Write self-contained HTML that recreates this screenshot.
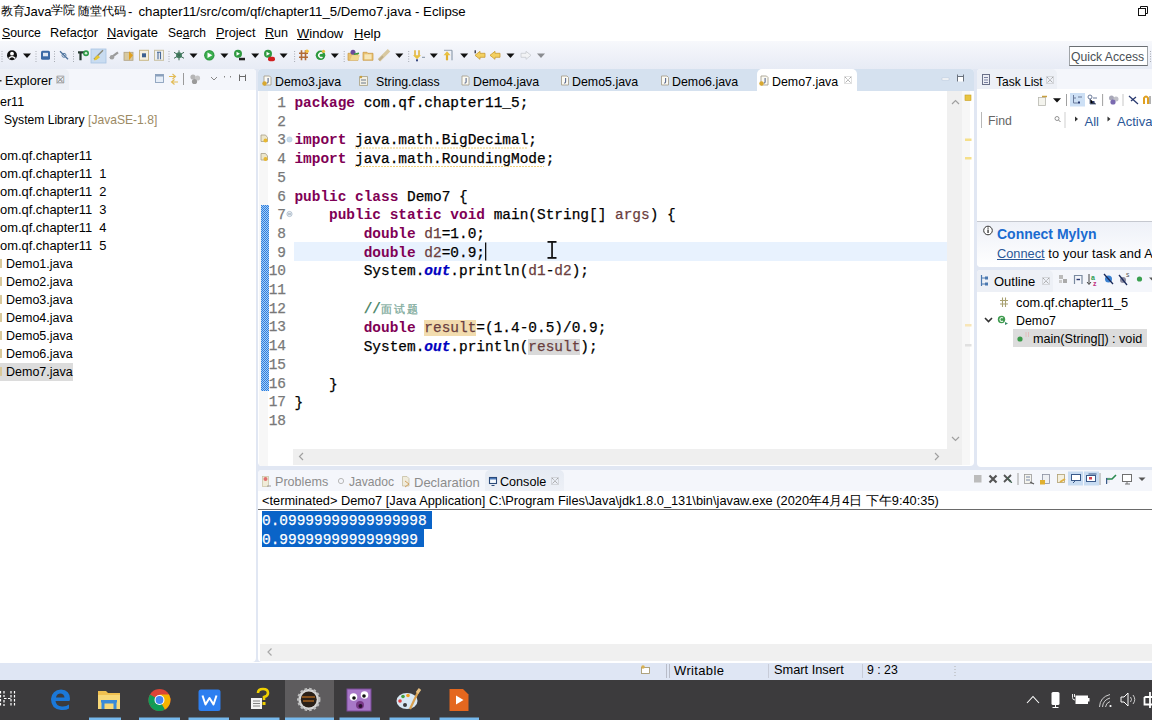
<!DOCTYPE html>
<html><head><meta charset="utf-8">
<style>
*{margin:0;padding:0;box-sizing:border-box}
html,body{width:1152px;height:720px;overflow:hidden;background:#fff;font-family:"Liberation Sans",sans-serif;color:#000;position:relative}
div,span,svg{position:absolute}
.t{white-space:nowrap;line-height:1;font-size:13px}
.u{text-decoration:underline}
.m{font-family:"Liberation Mono",monospace;font-size:14.45px;white-space:pre;line-height:18.7px}
.kw{color:#7f0055;font-weight:bold;position:static;-webkit-text-stroke:0}
.m{-webkit-text-stroke:0.25px}
.var{color:#6a3e3e;position:static}
.fld{color:#0000c0;font-style:italic;font-weight:bold;position:static}
.cm{color:#3f7f5f;position:static}
.s{position:static}
.sep{width:1px;background:#c9cdd6}
.dots{width:1px;height:14px;background:repeating-linear-gradient(#b0b4bc 0 1px,transparent 1px 3px)}
.dd{width:0;height:0;border-left:4px solid transparent;border-right:4px solid transparent;border-top:4px solid #111}
</style></head><body>
<!-- title bar -->
<div class="t" style="left:1px;top:5px;font-size:12px">教育</div>
<div class="t" style="left:24px;top:5px;font-size:13px">Java</div>
<div class="t" style="left:51px;top:5px;font-size:11.5px">学院</div>
<div class="t" style="left:78px;top:5px;font-size:12px">随堂代码</div>
<div class="t" style="left:128px;top:5px;font-size:13px">-</div><div class="t" style="left:138.5px;top:5px;font-size:13.23px">chapter11/src/com/qf/chapter11_5/Demo7.java - Eclipse</div>
<svg style="left:1137px;top:5px" width="12" height="12"><rect x="1.5" y="3.5" width="7" height="7" fill="none" stroke="#111"/><path d="M3.5 3.5V1.5H10.5V8.5H8.5" fill="none" stroke="#111"/></svg>

<!-- menu -->
<div class="t" style="left:2px;top:27px;font-size:12.3px"><span class="s u">S</span>ource</div>
<div class="t" style="left:50px;top:27px;font-size:12.7px">Refac<span class="s u">t</span>or</div>
<div class="t" style="left:107px;top:27px;font-size:12.9px"><span class="s u">N</span>avigate</div>
<div class="t" style="left:168px;top:27px;font-size:12px">Se<span class="s u">a</span>rch</div>
<div class="t" style="left:216px;top:27px;font-size:12.7px"><span class="s u">P</span>roject</div>
<div class="t" style="left:265px;top:27px;font-size:12.6px"><span class="s u">R</span>un</div>
<div class="t" style="left:297px;top:27px;font-size:13px"><span class="s u">W</span>indow</div>
<div class="t" style="left:354px;top:27px;font-size:13px"><span class="s u">H</span>elp</div>

<!-- toolbar -->
<div id="toolbar" style="left:0;top:41px;width:1152px;height:28px;background:linear-gradient(#f7f8fc,#e7ebf5)"></div>
<svg style="left:0;top:0" width="1152" height="69"><rect x="1.5" y="51" width="1" height="1" fill="#a8acb4"/>
<rect x="1.5" y="53.5" width="1" height="1" fill="#a8acb4"/>
<rect x="1.5" y="56.0" width="1" height="1" fill="#a8acb4"/>
<rect x="1.5" y="58.5" width="1" height="1" fill="#a8acb4"/>
<rect x="1.5" y="61.0" width="1" height="1" fill="#a8acb4"/>
<circle cx="12" cy="55.3" r="5" fill="#111"/><circle cx="12" cy="53.699999999999996" r="1.9" fill="#fff"/><path d="M8.6 58.5Q12 54.699999999999996 15.4 58.5" stroke="#fff" stroke-width="1.4" fill="none"/>
<path d="M23 53.6H31L27 58.0Z" fill="#111"/>
<rect x="35.5" y="51" width="1" height="1" fill="#a8acb4"/>
<rect x="35.5" y="53.5" width="1" height="1" fill="#a8acb4"/>
<rect x="35.5" y="56.0" width="1" height="1" fill="#a8acb4"/>
<rect x="35.5" y="58.5" width="1" height="1" fill="#a8acb4"/>
<rect x="35.5" y="61.0" width="1" height="1" fill="#a8acb4"/>
<rect x="41" y="50.8" width="9" height="9" rx="1.5" fill="#3b6aa6"/><rect x="43" y="52.8" width="5" height="3.5" fill="#dfe8f4"/>
<rect x="54.0" y="51" width="1" height="1" fill="#a8acb4"/>
<rect x="54.0" y="53.5" width="1" height="1" fill="#a8acb4"/>
<rect x="54.0" y="56.0" width="1" height="1" fill="#a8acb4"/>
<rect x="54.0" y="58.5" width="1" height="1" fill="#a8acb4"/>
<rect x="54.0" y="61.0" width="1" height="1" fill="#a8acb4"/>
<path d="M60 51.3L68 59.3" stroke="#4a6f9a" stroke-width="1.3"/><circle cx="64" cy="55.3" r="2" fill="none" stroke="#5a7fa8" stroke-width="1"/>
<rect x="73.0" y="51" width="1" height="1" fill="#a8acb4"/>
<rect x="73.0" y="53.5" width="1" height="1" fill="#a8acb4"/>
<rect x="73.0" y="56.0" width="1" height="1" fill="#a8acb4"/>
<rect x="73.0" y="58.5" width="1" height="1" fill="#a8acb4"/>
<rect x="73.0" y="61.0" width="1" height="1" fill="#a8acb4"/>
<path d="M78 52.3H84M80.5 52.3V60.3" stroke="#263a30" stroke-width="2.2"/><circle cx="86" cy="53.3" r="3" fill="#2e9a47"/><circle cx="86" cy="53.3" r="1.3" fill="#d8f0d8"/>
<rect x="91" y="49" width="15" height="14" fill="#c9dcf1" stroke="#a9c4e4" stroke-width="0.8"/>
<path d="M94 59.3L97 56.3L103 50.3" stroke="#8a8a7a" stroke-width="1.5"/><path d="M94 60.3Q95 56.3 98 55.3L100 57.3Q97 60.3 94 60.3Z" fill="#e8c830"/>
<path d="M110 58.3L114 55.3L118 52.3" stroke="#9a9a9a" stroke-width="2.2"/><circle cx="112" cy="57.3" r="2.2" fill="#a0a0a0"/>
<rect x="124" y="52.3" width="9" height="8" fill="#d8c9a0" stroke="#b0a080" stroke-width="0.8"/><path d="M129 51.3L133 55.3L129 60.3" fill="#e0a020"/>
<rect x="139.5" y="50.3" width="9" height="10" fill="#f4f0e0" stroke="#c8b888" stroke-width="1"/><rect x="142" y="53.3" width="4" height="4" fill="#3c6090"/>
<rect x="154.5" y="50.3" width="9" height="10" fill="#eef0f0" stroke="#c8c0a0" stroke-width="1"/><path d="M157 52.3H161M158 52.3V59.3M160.5 52.3V59.3" stroke="#4a6a98" stroke-width="1.1"/>
<rect x="168.5" y="51" width="1" height="1" fill="#a8acb4"/>
<rect x="168.5" y="53.5" width="1" height="1" fill="#a8acb4"/>
<rect x="168.5" y="56.0" width="1" height="1" fill="#a8acb4"/>
<rect x="168.5" y="58.5" width="1" height="1" fill="#a8acb4"/>
<rect x="168.5" y="61.0" width="1" height="1" fill="#a8acb4"/>
<circle cx="179" cy="55.3" r="3" fill="#4a8a6a"/><path d="M174 52.3L184 58.3M174 58.3L184 52.3M179 50.3V60.3" stroke="#3d6a55" stroke-width="1"/>
<path d="M189.5 53.6H197.5L193.5 58.0Z" fill="#111"/>
<circle cx="209.3" cy="55.3" r="5.2" fill="#2f9a40"/><circle cx="209.3" cy="55.3" r="4" fill="#3cae50"/><path d="M207.5 52.5L212.3 55.3L207.5 58.099999999999994Z" fill="#fff"/>
<path d="M220.4 53.6H228.4L224.4 58.0Z" fill="#111"/>
<circle cx="238" cy="53.8" r="4" fill="#2f9a40"/><path d="M236.5 51.8L240 53.8L236.5 55.8Z" fill="#fff"/><rect x="239" y="57.8" width="6" height="2.5" fill="#222"/>
<path d="M251.2 53.6H259.2L255.2 58.0Z" fill="#111"/>
<circle cx="268" cy="53.8" r="4" fill="#2f9a40"/><path d="M266.5 51.8L270 53.8L266.5 55.8Z" fill="#fff"/><rect x="268" y="56.8" width="7" height="4.5" rx="2" fill="#d02020"/>
<path d="M279.6 53.6H287.6L283.6 58.0Z" fill="#111"/>
<rect x="294.1" y="51" width="1" height="1" fill="#a8acb4"/>
<rect x="294.1" y="53.5" width="1" height="1" fill="#a8acb4"/>
<rect x="294.1" y="56.0" width="1" height="1" fill="#a8acb4"/>
<rect x="294.1" y="58.5" width="1" height="1" fill="#a8acb4"/>
<rect x="294.1" y="61.0" width="1" height="1" fill="#a8acb4"/>
<path d="M299 53.3H308M299 57.3H308M301.5 50.3V60.3M305.5 50.3V60.3" stroke="#b06a38" stroke-width="1.6"/><circle cx="307" cy="51.3" r="1.8" fill="#f0c040"/>
<circle cx="320.5" cy="55.3" r="4.8" fill="#2d9a3e"/><path d="M322.5 53.5A2.3 2.3 0 1 0 322.5 57.099999999999994" stroke="#fff" stroke-width="1.5" fill="none"/><circle cx="323.5" cy="51.3" r="1.6" fill="#e8c040"/>
<path d="M330.8 53.6H338.8L334.8 58.0Z" fill="#111"/>
<rect x="343.7" y="51" width="1" height="1" fill="#a8acb4"/>
<rect x="343.7" y="53.5" width="1" height="1" fill="#a8acb4"/>
<rect x="343.7" y="56.0" width="1" height="1" fill="#a8acb4"/>
<rect x="343.7" y="58.5" width="1" height="1" fill="#a8acb4"/>
<rect x="343.7" y="61.0" width="1" height="1" fill="#a8acb4"/>
<path d="M348 53.3H352L353 54.3H358V60.3H348Z" fill="#e8c070" stroke="#c89840" stroke-width="0.7"/><path d="M350 60.3L352 55.3H360L358 60.3Z" fill="#f0d890"/><circle cx="353" cy="52.3" r="2.5" fill="#6a4a9a"/><path d="M354 54.3L359 53.3" stroke="#3a9a40" stroke-width="1.5"/>
<path d="M363 52.3H367L368 53.3H373V60.3H363Z" fill="#e8c070" stroke="#c89840" stroke-width="0.7"/><rect x="364.5" y="54.3" width="7" height="5" fill="#f6e6b8"/>
<path d="M379 60.3L389 50.3" stroke="#d8c8a0" stroke-width="3.5"/><path d="M379 60.3L383 56.3" stroke="#bfae88" stroke-width="2"/>
<path d="M395.3 53.6H403.3L399.3 58.0Z" fill="#111"/>
<rect x="408.2" y="51" width="1" height="1" fill="#a8acb4"/>
<rect x="408.2" y="53.5" width="1" height="1" fill="#a8acb4"/>
<rect x="408.2" y="56.0" width="1" height="1" fill="#a8acb4"/>
<rect x="408.2" y="58.5" width="1" height="1" fill="#a8acb4"/>
<rect x="408.2" y="61.0" width="1" height="1" fill="#a8acb4"/>
<path d="M415 50.3V56.3M419 50.3V56.3" stroke="#e0b030" stroke-width="1.5"/><path d="M413 55.3H421L417 59.3Z" fill="#e8c040"/><rect x="416" y="59.3" width="2" height="2" fill="#3a4a80"/><path d="M422 57.3H425" stroke="#8090a0" stroke-width="1"/>
<path d="M429.8 53.6H437.8L433.8 58.0Z" fill="#111"/>
<path d="M447 60.3V54.3" stroke="#e0b030" stroke-width="2.2"/><path d="M443.5 55.3H450.5L447 51.3Z" fill="#e8c040"/><path d="M452 50.3V60.3" stroke="#7f8ea0" stroke-width="1"/><path d="M444 50.3H452" stroke="#7f8ea0" stroke-width="0.8"/>
<path d="M460.2 53.6H468.2L464.2 58.0Z" fill="#111"/>
<path d="M475 55.3L480 51.3V53.3H485V57.3H480V59.3Z" fill="#f3d060" stroke="#c89a30" stroke-width="0.8"/><rect x="474.5" y="50.3" width="1.5" height="3" fill="#445"/>
<path d="M490 55.3L495 51.3V53.3H500V57.3H495V59.3Z" fill="#f3d060" stroke="#c89a30" stroke-width="0.8"/>
<path d="M506.5 53.6H514.5L510.5 58.0Z" fill="#111"/>
<path d="M531 55.3L526 51.3V53.3H521V57.3H526V59.3Z" fill="#f2f3f5" stroke="#c8cbd0" stroke-width="0.8"/>
<path d="M537 53.6H545L541 58.0Z" fill="#8a8c90"/>
<rect x="1150.0" y="51" width="1" height="1" fill="#a8acb4"/>
<rect x="1150.0" y="53.5" width="1" height="1" fill="#a8acb4"/>
<rect x="1150.0" y="56.0" width="1" height="1" fill="#a8acb4"/>
<rect x="1150.0" y="58.5" width="1" height="1" fill="#a8acb4"/>
<rect x="1150.0" y="61.0" width="1" height="1" fill="#a8acb4"/>
</svg>
<div style="left:1068.5px;top:46px;width:79px;height:20px;background:#fff;border:1px solid #a0a4a8;border-top-color:#6a6e72;border-bottom-color:#6a6e72"></div>
<div class="t" style="left:1071px;top:51px;font-size:12.2px;color:#4a5055">Quick Access</div>

<!-- main bg -->
<div style="left:0;top:69px;width:1152px;height:593px;background:#e1e7f3"></div>

<!-- LEFT PANEL -->
<div style="left:0;top:69px;width:256px;height:593px;background:#fff;border-radius:0 4px 4px 0;overflow:hidden">
  <div style="left:0;top:0;width:256px;height:21px;background:#f4f6fb"></div>
  <div style="left:0;top:0;width:69px;height:21px;background:#edf0f6;border-radius:0 5px 0 0"></div>
  <div class="t" style="left:5px;top:6px;font-size:12.7px">Explorer</div>
  <div class="t" style="left:56px;top:6px;font-size:10px;color:#888">☒</div>
  <div class="t" style="left:0px;top:27px;font-size:12.5px">er11</div>
  <div class="t" style="left:4px;top:45px;font-size:12.1px">System Library <span class="s" style="color:#9c8a64">[JavaSE-1.8]</span></div>
  <div class="t" style="left:0px;top:81px;font-size:12.9px">om.qf.chapter11</div>
  <div class="t" style="left:0px;top:99px;font-size:12.9px">om.qf.chapter11&nbsp; 1</div>
  <div class="t" style="left:0px;top:117px;font-size:12.9px">om.qf.chapter11&nbsp; 2</div>
  <div class="t" style="left:0px;top:135px;font-size:12.9px">om.qf.chapter11&nbsp; 3</div>
  <div class="t" style="left:0px;top:153px;font-size:12.9px">om.qf.chapter11&nbsp; 4</div>
  <div class="t" style="left:0px;top:171px;font-size:12.9px">om.qf.chapter11&nbsp; 5</div>
  <div style="left:0;top:294px;width:73px;height:18px;background:#dcdcdc"></div>
  <div class="t" style="left:6px;top:189px;font-size:12.5px">Demo1.java</div>
  <div class="t" style="left:6px;top:207px;font-size:12.5px">Demo2.java</div>
  <div class="t" style="left:6px;top:225px;font-size:12.5px">Demo3.java</div>
  <div class="t" style="left:6px;top:243px;font-size:12.5px">Demo4.java</div>
  <div class="t" style="left:6px;top:261px;font-size:12.5px">Demo5.java</div>
  <div class="t" style="left:6px;top:279px;font-size:12.5px">Demo6.java</div>
  <div class="t" style="left:6px;top:297px;font-size:12.5px">Demo7.java</div>
</div>

<!-- EDITOR -->
<div style="left:258px;top:69px;width:716px;height:397px;background:#fff;border-radius:4px;overflow:hidden">
  <div style="left:0;top:0;width:716px;height:22px;background:#d5e1ef"></div>
  <div style="left:499px;top:0;width:100px;height:22px;background:#fff;border-radius:5px 5px 0 0"></div>
  <div class="t" style="left:17px;top:7px;font-size:12.4px">Demo3.java</div>
  <div class="t" style="left:118px;top:7px;font-size:12.3px">String.class</div>
  <div class="t" style="left:215px;top:7px;font-size:12.4px">Demo4.java</div>
  <div class="t" style="left:314px;top:7px;font-size:12.4px">Demo5.java</div>
  <div class="t" style="left:414px;top:7px;font-size:12.4px">Demo6.java</div>
  <div class="t" style="left:514px;top:7px;font-size:12.4px">Demo7.java</div>
  <!-- ruler -->
  <div style="left:1px;top:22px;width:9px;height:376px;background:#f7f7f7"></div>
  <!-- current line -->
  <div style="left:36px;top:173px;width:653px;height:19px;background:#e8f2fe"></div>
  <!-- vscroll -->
  <div style="left:689px;top:22px;width:15px;height:358px;background:#f0f0f0"></div><div style="left:704px;top:22px;width:8px;height:374px;background:#f7f7f7"></div>
  <!-- hscroll -->
  <div style="left:10px;top:380px;width:25px;height:16px;background:#fff"></div><div style="left:35px;top:380px;width:669px;height:16px;background:#efefef"></div>
</div>

<!-- TASK LIST -->
<div style="left:977px;top:69px;width:175px;height:198px;background:#fff;border-radius:4px 0 0 4px;overflow:hidden">
  <div style="left:0;top:0;width:175px;height:20px;background:#f4f6fb"></div>
  <div style="left:0;top:0;width:80px;height:20px;background:#edf0f6;border-radius:0 5px 0 0"></div>
  <div class="t" style="left:19px;top:7px;font-size:12px">Task List</div>
  <div class="t" style="left:11px;top:46px;font-size:12.3px;color:#666">Find</div>
  <div class="t" style="left:107.5px;top:46px;font-size:13px;color:#2b5797">All</div>
  <div class="t" style="left:140px;top:46px;font-size:13px;color:#2b5797">Activate...</div>
  <div style="left:0;top:152px;width:175px;height:1px;background:#c5c8cf"></div>
  <div style="left:0;top:153px;width:175px;height:45px;background:linear-gradient(#eef1f8,#fff)"></div>
  <div class="t" style="left:20px;top:158px;font-size:14px;font-weight:bold;color:#1a6bd0">Connect Mylyn</div>
  <div class="t" style="left:20px;top:179px;font-size:12.8px"><span class="s u" style="color:#2b5797">Connect</span><span class="s" style="letter-spacing:0.12px"> to your task and ALM tools</span></div>
</div>

<!-- OUTLINE -->
<div style="left:977px;top:270px;width:175px;height:197px;background:#fff;border-radius:4px 0 0 4px;overflow:hidden">
  <div style="left:0;top:0;width:175px;height:22px;background:#f4f6fb"></div>
  <div style="left:0;top:0;width:76px;height:22px;background:#edf0f6;border-radius:0 5px 0 0"></div>
  <div class="t" style="left:17px;top:5px;font-size:13px">Outline</div>
  <div class="t" style="left:39px;top:26.5px;font-size:12.8px">com.qf.chapter11_5</div>
  <div class="t" style="left:39px;top:44.5px;font-size:12.4px">Demo7</div>
  <div style="left:36px;top:59px;width:134px;height:18px;background:#dcdcdc"></div>
  <div class="t" style="left:56px;top:62.5px;font-size:12.6px">main(String[]) : void</div>
</div>

<!-- CONSOLE -->
<div style="left:258px;top:470px;width:894px;height:192px;background:#fff;border-radius:4px 0 0 4px;overflow:hidden">
  <div style="left:0;top:0;width:894px;height:21px;background:#f4f6fb"></div>
  <div style="left:227px;top:0;width:79px;height:21px;background:linear-gradient(#e6ebf3,#edf0f6);border-radius:5px 5px 0 0"></div>
  <div class="t" style="left:17px;top:6px;font-size:12.6px;color:#8c8c8c">Problems</div>
  <div class="t" style="left:91px;top:6px;font-size:12.1px;color:#8c8c8c">Javadoc</div>
  <div class="t" style="left:156px;top:6px;font-size:13px;color:#8c8c8c">Declaration</div>
  <div class="t" style="left:242px;top:6px;font-size:12.6px">Console</div>
  <div class="t" style="left:4px;top:25px;font-size:12.8px">&lt;terminated&gt; Demo7 [Java Application] C:\Program Files\Java\jdk1.8.0_131\bin\javaw.exe (2020年4月4日 下午9:40:35)</div>
  <div style="left:0;top:39px;width:894px;height:1px;background:#6a6a6a"></div>
  <div style="left:4px;top:41px;width:170px;height:18px;background:#0a64c8"></div>
  <div style="left:4px;top:59px;width:162px;height:18px;background:#0a64c8"></div>
  <div class="m" style="left:4px;top:42px;color:#fff">0.09999999999999998
0.9999999999999999</div>
  <div style="left:2px;top:174px;width:892px;height:17px;background:#f0f0f0"></div>
</div>

<!-- CODE -->
<div class="m" style="left:294.4px;top:94px;color:#000"><span class="kw">package</span> com.qf.chapter11_5;

<span class="kw">import</span> java.math.BigDecimal;
<span class="kw">import</span> java.math.RoundingMode;

<span class="kw">public</span> <span class="kw">class</span> Demo7 {
    <span class="kw">public</span> <span class="kw">static</span> <span class="kw">void</span> main(String[] <span class="var">args</span>) {
        <span class="kw">double</span> <span class="var">d1</span>=1.0;
        <span class="kw">double</span> <span class="var">d2</span>=0.9;
        System.<span class="fld">out</span>.println(<span class="var">d1</span>-<span class="var">d2</span>);

        <span class="cm">//<span class="s" style="font-size:11px;letter-spacing:1.9px;color:#7aa898">面试题</span></span>
        <span class="kw">double</span> <span class="var" style="background:#f2dcae">result</span>=(1.4-0.5)/0.9;
        System.<span class="fld">out</span>.println(<span class="var" style="background:#d9d9d9">result</span>);

    }
}
</div>
<div class="m" style="left:266px;top:94px;width:20px;text-align:right;color:#787878">1
2
3
4
5
6
7
8
9
10
11
12
13
14
15
16
17
18</div>

<!-- STATUS -->
<div style="left:0;top:663px;width:1152px;height:17px;background:#dfe6f4"></div>
<div class="t" style="left:674px;top:664px;font-size:13px;letter-spacing:0.35px">Writable</div>
<div class="t" style="left:774px;top:664px;font-size:12.8px">Smart Insert</div>
<div class="t" style="left:867px;top:664px;font-size:12.3px">9 : 23</div>

<!-- TASKBAR -->
<div style="left:0;top:680px;width:1152px;height:40px;background:#3c3b3d"></div>
<div style="left:285px;top:680px;width:49px;height:40px;background:#5b5a5c"></div>
<svg style="left:0;top:0;pointer-events:none" width="1152" height="720"><rect x="155.5" y="74.5" width="8" height="8" fill="#e6eef8" stroke="#8aa0bc" stroke-width="0.9"/><rect x="155.5" y="74.5" width="8" height="2" fill="#8aa0bc"/>
<path d="M169 76.5H176M172.5 74L175.5 76.5L172.5 79" stroke="#e2bb55" stroke-width="1.1" fill="none"/><path d="M178 82H171M174.5 79.5L171.5 82L174.5 84.5" stroke="#e2bb55" stroke-width="1.1" fill="none"/>
<rect x="183.0" y="73" width="1" height="12" fill="#9a9a9a"/>
<circle cx="193" cy="77" r="2.6" fill="#b5b5b5"/><circle cx="197.5" cy="78" r="2.6" fill="#c5c5c5"/><circle cx="194.5" cy="81.5" r="2.6" fill="#9a9a9a"/>
<path d="M211 77L214 80L217 77" stroke="#888" stroke-width="1" fill="none"/>
<rect x="224" y="76" width="1" height="1.5" fill="#888"/><rect x="230" y="76" width="1" height="1.5" fill="#888"/>
<path d="M239.5 74.5V81M245.5 74.5V81M239.5 76.5H245.5" stroke="#6a6a6a" stroke-width="1" fill="none"/>
<rect x="0" y="80" width="1.5" height="1.5" fill="#333"/>
<path d="M57 77L63 83M63 77L57 83" stroke="#9a9a9a" stroke-width="1" stroke-dasharray="1.2 0.8"/><rect x="56.5" y="76.5" width="7" height="7" fill="none" stroke="#9a9a9a" stroke-width="0.6" stroke-dasharray="1 1"/>
<rect x="0" y="259" width="2" height="9" fill="#d8c89a"/>
<rect x="0" y="277" width="2" height="9" fill="#d8c89a"/>
<rect x="0" y="295" width="2" height="9" fill="#d8c89a"/>
<rect x="0" y="313" width="2" height="9" fill="#d8c89a"/>
<rect x="0" y="331" width="2" height="9" fill="#d8c89a"/>
<rect x="0" y="349" width="2" height="9" fill="#d8c89a"/>
<rect x="0" y="367" width="2" height="9" fill="#d8c89a"/>
<path d="M264.0 76.0H269.5L271.0 77.5V85.0H264.0Z" fill="#fbfaf3" stroke="#a8a290" stroke-width="0.9"/><path d="M268.1 78.0V82.0Q267.9 83.3 266.5 83.0" stroke="#5a6a90" stroke-width="1.1" fill="none"/>
<circle cx="264.5" cy="83.5" r="2.2" fill="#d8a830"/>
<path d="M359.5 76.5H367.5V85.5H359.5Z" fill="#f2efe4" stroke="#a8a080" stroke-width="0.8"/><path d="M361 80H366M361 83H366" stroke="#6a7a8a" stroke-width="1.2"/><circle cx="361" cy="77" r="1.2" fill="#c8a040"/>
<path d="M462.0 76.0H467.5L469.0 77.5V85.0H462.0Z" fill="#fbfaf3" stroke="#a8a290" stroke-width="0.9"/><path d="M466.1 78.0V82.0Q465.9 83.3 464.5 83.0" stroke="#5a6a90" stroke-width="1.1" fill="none"/>
<path d="M561.5 76.0H567L568.5 77.5V85.0H561.5Z" fill="#fbfaf3" stroke="#a8a290" stroke-width="0.9"/><path d="M565.6 78.0V82.0Q565.4 83.3 564 83.0" stroke="#5a6a90" stroke-width="1.1" fill="none"/>
<path d="M661.5 76.0H667L668.5 77.5V85.0H661.5Z" fill="#fbfaf3" stroke="#a8a290" stroke-width="0.9"/><path d="M665.6 78.0V82.0Q665.4 83.3 664 83.0" stroke="#5a6a90" stroke-width="1.1" fill="none"/>
<path d="M761.0 76.0H766.5L768.0 77.5V85.0H761.0Z" fill="#fbfaf3" stroke="#a8a290" stroke-width="0.9"/><path d="M765.1 78.0V82.0Q764.9 83.3 763.5 83.0" stroke="#5a6a90" stroke-width="1.1" fill="none"/>
<circle cx="761.5" cy="83.5" r="2.2" fill="#d8a830"/>
<path d="M845 77L851 83M851 77L845 83" stroke="#9a9a9a" stroke-width="1" stroke-dasharray="1.2 0.8"/><rect x="844.5" y="76.5" width="7" height="7" fill="none" stroke="#9a9a9a" stroke-width="0.6" stroke-dasharray="1 1"/>
<rect x="942" y="78" width="7" height="2" fill="#fff" stroke="#b8c4d4" stroke-width="0.5"/>
<rect x="957.5" y="76.5" width="6" height="5" fill="#fff"/><path d="M957.5 74.5V81.5M963.5 74.5V81.5M957.5 76.5H963.5" stroke="#6a727e" stroke-width="1" fill="none"/>
<path d="M261 135H265.5L267.5 137.5V141.5H261Z" fill="#ece6cc" stroke="#a8a088" stroke-width="0.8"/><circle cx="265.5" cy="140.5" r="2" fill="#e8b830"/>
<path d="M261 153.5H265.5L267.5 156.0V160.0H261Z" fill="#ece6cc" stroke="#a8a088" stroke-width="0.8"/><circle cx="265.5" cy="159.0" r="2" fill="#e8b830"/>
<circle cx="289.5" cy="139.5" r="2.6" fill="#c8dcec" stroke="#b0c8dc" stroke-width="0.6"/>
<circle cx="289.5" cy="214" r="2.6" fill="#e8eef4" stroke="#a8b8c8" stroke-width="0.8"/><path d="M288 214H291" stroke="#7a8a9a" stroke-width="0.8"/>
<defs><pattern id="chk" width="2" height="2" patternUnits="userSpaceOnUse"><rect width="2" height="2" fill="#a8ccf4"/><rect width="1" height="1" fill="#2c7fe0"/><rect x="1" y="1" width="1" height="1" fill="#2c7fe0"/></pattern></defs>
<rect x="261" y="205" width="8" height="186" fill="url(#chk)"/>
<rect x="355" y="147.5" width="172" height="1" fill="url(#sq)"/>
<rect x="355" y="166" width="189" height="1" fill="url(#sq)"/>
<defs><pattern id="sq" width="3" height="1" patternUnits="userSpaceOnUse"><rect width="2" height="1" fill="#f0cf78"/></pattern></defs>
<rect x="485" y="242.5" width="1.3" height="18" fill="#111"/>
<rect x="547.5" y="241" width="9" height="1.8" fill="#111"/><rect x="547.5" y="257" width="9" height="1.8" fill="#111"/><rect x="551.2" y="242" width="1.7" height="16" fill="#111"/>
<rect x="965" y="95" width="6" height="5.5" fill="#e8c440" stroke="#c8a020" stroke-width="0.6"/>
<rect x="965" y="138.5" width="6.5" height="2.5" fill="#f5df8a"/>
<rect x="965" y="157" width="6.5" height="2.5" fill="#f5df8a"/>
<rect x="965" y="324" width="6.5" height="2.5" fill="#f8e6b8"/>
<rect x="965" y="344" width="6.5" height="2.5" fill="#e0e0e0"/>
<path d="M952 104L955.5 100.5L959 104" stroke="#a0a0a0" stroke-width="1.2" fill="none"/>
<path d="M952 437L955.5 440.5L959 437" stroke="#a0a0a0" stroke-width="1.2" fill="none"/>
<path d="M303 453L299.5 456.5L303 460" stroke="#a0a0a0" stroke-width="1.2" fill="none"/>
<path d="M935 453L938.5 456.5L935 460" stroke="#a0a0a0" stroke-width="1.2" fill="none"/>
<rect x="982.5" y="74.5" width="7" height="10" fill="#eceef4" stroke="#6a7088" stroke-width="1"/><path d="M984 77.5H988M984 80H988M984 82.5H988" stroke="#7a80a0" stroke-width="1"/>
<path d="M1047 77L1053 83M1053 77L1047 83" stroke="#9a9a9a" stroke-width="1" stroke-dasharray="1.2 0.8"/><rect x="1046.5" y="76.5" width="7" height="7" fill="none" stroke="#9a9a9a" stroke-width="0.6" stroke-dasharray="1 1"/>
<rect x="1038.5" y="97.5" width="7" height="8" fill="#f4f4ee" stroke="#b8b8b0" stroke-width="0.8"/><path d="M1042 96.5L1047 96.5" stroke="#c8a040" stroke-width="1.5"/>
<path d="M1053 98.2H1061L1057 102.4Z" fill="#111"/>
<rect x="1066.0" y="94" width="1" height="12" fill="#a0a0a0"/>
<rect x="1070" y="93" width="15" height="13.5" fill="#cde0f5"/>
<path d="M1073.5 95V103M1073.5 98H1076M1073.5 103H1078M1078 97H1082" stroke="#6a7a9a" stroke-width="1"/><rect x="1078" y="101.5" width="2" height="2" fill="#2a3a70"/>
<circle cx="1090" cy="97" r="2" fill="none" stroke="#6a7a9a" stroke-width="1"/><path d="M1090 99V104H1096M1093 98H1097" stroke="#6a7a9a" stroke-width="1"/><rect x="1092.5" y="101" width="2" height="2" fill="#2a3a70"/>
<rect x="1102.1" y="94" width="1" height="12" fill="#a0a0a0"/>
<circle cx="1111.5" cy="98" r="2.5" fill="#a8a8b8"/><circle cx="1116" cy="99" r="2.5" fill="#c0c0c8"/><circle cx="1113" cy="102" r="2.6" fill="#7a6ab0"/>
<rect x="1122.5" y="94" width="1" height="12" fill="#c8c8c8"/>
<path d="M1129 96L1138 104M1131 101L1136 97" stroke="#2a3a70" stroke-width="1.3"/>
<path d="M1144 104V98Q1146 95 1148 98V104" stroke="#e0a020" stroke-width="2" fill="none"/><path d="M1150 96V104" stroke="#666" stroke-width="1"/>
<rect x="981.0" y="112" width="1" height="16" fill="#b8b8b8"/>
<circle cx="1057" cy="118.5" r="2" fill="none" stroke="#888" stroke-width="0.9"/><path d="M1058.5 120L1060.5 122" stroke="#888" stroke-width="1"/>
<rect x="1064.5" y="112" width="1" height="16" fill="#d0d0d0"/>
<path d="M1075 116.5L1078 119L1075 121.5Z" fill="#333"/><path d="M1107.5 116.5L1110.5 119L1107.5 121.5Z" fill="#333"/>
<circle cx="988" cy="230.5" r="4.3" fill="#fff" stroke="#333" stroke-width="1"/><rect x="987.4" y="229.5" width="1.3" height="3.5" fill="#333"/><rect x="987.4" y="227.5" width="1.3" height="1.2" fill="#333"/>
<path d="M981.5 275V286M981.5 278H985M981.5 284H985" stroke="#4a78b0" stroke-width="1.2" fill="none"/><rect x="985" y="276.5" width="3" height="3" fill="#4a78b0"/><rect x="985" y="282.5" width="3" height="3" fill="#4a78b0"/>
<path d="M1043 278L1049 284M1049 278L1043 284" stroke="#9a9a9a" stroke-width="1" stroke-dasharray="1.2 0.8"/><rect x="1042.5" y="277.5" width="7" height="7" fill="none" stroke="#9a9a9a" stroke-width="0.6" stroke-dasharray="1 1"/>
<rect x="1059" y="275" width="4" height="4" fill="#bbb"/><rect x="1063" y="279" width="4" height="4" fill="#aaa"/><rect x="1059" y="280" width="3" height="3" fill="#ccc"/>
<path d="M1074.5 284V275.5H1082V284" stroke="#7a8aa0" stroke-width="1.2" fill="none"/><path d="M1076.5 279.5H1080" stroke="#2a3a70" stroke-width="1.4"/>
<path d="M1089 274V284M1087 282L1089 284.5L1091 282" stroke="#444" stroke-width="1" fill="none"/><text x="1091" y="280" font-size="7" font-family="Liberation Sans" font-weight="bold" fill="#2a9a50">a</text><text x="1093" y="286" font-size="7" font-family="Liberation Sans" font-weight="bold" fill="#c03080">z</text>
<circle cx="1108.5" cy="279" r="3.5" fill="#3a80d0"/><path d="M1104 274L1113 284" stroke="#1a2a5a" stroke-width="1.3"/>
<circle cx="1123" cy="280" r="3" fill="#8a8aa0"/><path d="M1119 275L1127 285" stroke="#1a2a5a" stroke-width="1.3"/><text x="1126" y="277" font-size="5" font-family="Liberation Sans" fill="#333">S</text>
<circle cx="1139.5" cy="279" r="2.6" fill="#3aa050"/>
<path d="M1149 277.5H1155L1152 280.5Z" fill="#555"/>
<path d="M1000 300.5H1008M1000 304H1008M1002.5 297.5V307M1005.5 297.5V307" stroke="#a8a070" stroke-width="1.1"/>
<path d="M985 318L988.5 321.5L992 318" stroke="#333" stroke-width="1.6" fill="none"/>
<circle cx="1001.5" cy="319.5" r="3.7" fill="#3e9a4e"/><path d="M1003 318A1.9 1.9 0 1 0 1003 321" fill="none" stroke="#e8f6e8" stroke-width="1.1"/><path d="M1005 322L1008 323.5L1005 325Z" fill="#3a8a6a"/>
<circle cx="1020" cy="339" r="2.6" fill="#3a9a4a"/><path d="M1026 332.5V337M1028.5 332.5V337" stroke="#e89090" stroke-width="0.8" stroke-dasharray="1 1"/>
<rect x="262.5" y="476.5" width="6" height="10" fill="#f0ecd8" stroke="#c8c0a0" stroke-width="0.7"/><circle cx="265.5" cy="479" r="2" fill="#e07070"/><path d="M267 486H271" stroke="#888" stroke-width="0.8"/>
<circle cx="341" cy="481" r="2.6" fill="none" stroke="#b8b8b8" stroke-width="1"/>
<path d="M402.5 476.5H407L409 478.5V486H402.5Z" fill="#f0ecdc" stroke="#c0b898" stroke-width="0.7"/><path d="M405 481L409 484L405 487" stroke="#d0a060" stroke-width="1" fill="none"/>
<rect x="489.5" y="477.5" width="7" height="6" fill="#f4f8fc" stroke="#2a4a7a" stroke-width="1.1"/><rect x="490" y="478" width="6" height="1.5" fill="#4a78b8"/><path d="M491.5 485.5H494.5" stroke="#2a4a7a" stroke-width="1"/>
<path d="M552 478L558 484M558 478L552 484" stroke="#9a9a9a" stroke-width="1" stroke-dasharray="1.2 0.8"/><rect x="551.5" y="477.5" width="7" height="7" fill="none" stroke="#9a9a9a" stroke-width="0.6" stroke-dasharray="1 1"/>
<rect x="974" y="475" width="7.5" height="7.5" fill="#bcbcbc"/>
<path d="M989.5 475.5L996.5 482.5M996.5 475.5L989.5 482.5" stroke="#555" stroke-width="2.2"/>
<path d="M1004 475L1011 482M1011 475L1004 482" stroke="#555" stroke-width="1.8"/><path d="M1007 477L1012 483" stroke="#3a6a50" stroke-width="1"/>
<rect x="1017.5" y="473" width="1" height="12" fill="#a0a0a0"/>
<rect x="1024.5" y="474.5" width="7" height="9" fill="#f4f4ee" stroke="#999" stroke-width="0.8"/><path d="M1026 477H1030M1026 480H1030" stroke="#6a7aa0" stroke-width="0.9"/><path d="M1030 482L1034 484" stroke="#555" stroke-width="1.2"/>
<rect x="1042.5" y="474.5" width="7" height="9" fill="#eef0f4" stroke="#8a90a0" stroke-width="0.8"/><rect x="1040" y="480" width="5" height="4.5" fill="#e0b030"/>
<rect x="1057.5" y="474.5" width="7" height="8" fill="#f4f0e0" stroke="#b0a070" stroke-width="0.8"/><path d="M1060 482L1065 479" stroke="#e0b040" stroke-width="2"/>
<rect x="1068" y="471.5" width="15" height="14" fill="#c8dcf2"/><rect x="1084" y="471.5" width="15" height="14" fill="#c8dcf2"/>
<rect x="1071.5" y="474.5" width="9" height="6" fill="#fff" stroke="#3a5a8a" stroke-width="1"/><path d="M1073 483L1075 481" stroke="#3a5a8a" stroke-width="1"/>
<rect x="1086.5" y="475.5" width="9" height="6" fill="#fff" stroke="#3a5a8a" stroke-width="1"/><rect x="1089" y="477" width="3" height="2.5" fill="#d04050"/><rect x="1088.5" y="473.5" width="8" height="1" fill="#3a5a8a"/>
<rect x="1099.5" y="473" width="1" height="12" fill="#a0a0a0"/>
<rect x="1106" y="477" width="4" height="6" fill="#e8e8ee"/><path d="M1106 479H1112L1116 475" stroke="#2a8a50" stroke-width="1.6" fill="none"/><rect x="1106" y="478" width="1.2" height="6" fill="#3a5a8a"/>
<rect x="1122.5" y="474.5" width="9" height="7" fill="#fff" stroke="#707070" stroke-width="1"/><path d="M1125 484H1130M1127 482V484" stroke="#707070" stroke-width="1"/>
<path d="M1138.5 477.5H1145.5L1142 481.0Z" fill="#555"/>
<path d="M271.5 648.5L268 652L271.5 655.5" stroke="#a8a8a8" stroke-width="1.2" fill="none"/>
<rect x="641.5" y="667.5" width="8" height="6" fill="#fff" stroke="#a09060" stroke-width="0.8"/><circle cx="643" cy="667" r="1.8" fill="#d8b050"/>
<rect x="666.0" y="664" width="1" height="14" fill="#b8bcc8"/>
<rect x="669.0" y="664" width="1" height="14" fill="#b8bcc8"/>
<rect x="768.0" y="664" width="1" height="14" fill="#c8ccd8"/>
<rect x="862.0" y="664" width="1" height="14" fill="#c8ccd8"/>
<rect x="954.5" y="665" width="1" height="12" fill="url(#vd)"/><defs><pattern id="vd" width="1" height="3" patternUnits="userSpaceOnUse"><rect width="1" height="1" fill="#b0b0b0"/></pattern></defs>
<path d="M0.5 691V706M4 691V697M4 700V706M4 698.5H11M11 691V706M14.5 691V706" stroke="#fff" stroke-width="1.2" fill="none" stroke-dasharray="2.5 1.5"/>
<path d="M69.5 701H55.5Q56 706 62 706.5Q66 706.8 69 704.5V708.5Q66 710.5 61 710Q51 709 51 699Q52 690 61 689.5Q70 690 70 699Z" fill="#1b78d8"/><path d="M56 697.5H64.5Q64 693.5 60 693.5Q56.5 694 56 697.5Z" fill="#3c3b3d"/>
<path d="M98 691H106L108 693H120V709H98Z" fill="#f0c050"/><rect x="98" y="695" width="22" height="14" fill="#f8d878"/><path d="M103 709V702H115V709" stroke="#3a8ad8" stroke-width="3" fill="none"/><rect x="101" y="700" width="16" height="2.5" fill="#3a8ad8"/>
<circle cx="159.5" cy="700" r="11" fill="#db4437"/><path d="M159.5 700L149.9 705.5A11 11 0 0 0 165 709.5Z" fill="#0f9d58"/><path d="M159.5 700L165 709.5A11 11 0 0 0 169 694.5L159.5 694.5Z" fill="#f4b400"/><path d="M159.5 700L149.9 705.5A11 11 0 0 1 150 694.5Z" fill="#0f9d58"/><circle cx="159.5" cy="700" r="5" fill="#fff"/><circle cx="159.5" cy="700" r="3.9" fill="#4285f4"/>
<rect x="198.5" y="689.5" width="22" height="21.5" rx="2.5" fill="#2d7ff0"/><path d="M202.5 695.5L205.5 704.5L209.5 698L213.5 704.5L216.5 695.5" stroke="#fff" stroke-width="2" fill="none" stroke-linejoin="round"/>
<path d="M251 698H262V709H251Z" fill="#f4f4f4"/><path d="M253 701H260M253 703.5H260M253 706H260" stroke="#777" stroke-width="0.9"/><path d="M258 693Q258 689 263 689Q268 689 268 693Q268 696 264 697V700" stroke="#f0d000" stroke-width="2.6" fill="none"/><rect x="262.5" y="702" width="3" height="3" fill="#f0d000"/>
<rect x="285" y="680" width="49" height="40" fill="#5e5c5e"/>
<circle cx="308.75" cy="699.5" r="10.5" fill="#d8d8d8"/><circle cx="308.75" cy="699.5" r="10.5" fill="none" stroke="#bdbdbd" stroke-width="2.5" stroke-dasharray="2.5 2"/><circle cx="308.75" cy="699.5" r="8" fill="#2a2018"/><path d="M302 697H315M303 701H314" stroke="#e08020" stroke-width="1.2"/>
<rect x="347" y="689" width="24" height="22" fill="#a878c8"/><rect x="347" y="689" width="24" height="22" fill="none" stroke="#7a4a9a" stroke-width="1"/><circle cx="353.5" cy="697" r="3.8" fill="#fff"/><circle cx="364.5" cy="695" r="3.8" fill="#fff"/><circle cx="354" cy="698" r="1.8" fill="#111"/><circle cx="364" cy="696" r="1.8" fill="#111"/><circle cx="360" cy="705" r="4" fill="#7a3a8a"/><circle cx="360.5" cy="706" r="2" fill="#2a1030"/>
<ellipse cx="407" cy="701" rx="10.5" ry="8" fill="#d8e8f4"/><circle cx="400" cy="701" r="1.8" fill="#e04040"/><circle cx="403" cy="696.5" r="1.8" fill="#40a040"/><circle cx="408" cy="695.5" r="1.8" fill="#f0a020"/><circle cx="405" cy="705" r="2" fill="#3c3b3d"/><path d="M410 709L419 690" stroke="#d8a050" stroke-width="2.2"/><path d="M417 693L420 689" stroke="#e8c080" stroke-width="3"/>
<path d="M449.5 689H463L468.5 694.5V711H449.5Z" fill="#e4671e"/><path d="M456 695.5L463.5 700L456 704.5Z" fill="#fff"/>
<rect x="89" y="717.5" width="32" height="2.5" fill="#76b9ed"/>
<rect x="139" y="717.5" width="41" height="2.5" fill="#76b9ed"/>
<rect x="188.5" y="717.5" width="40.5" height="2.5" fill="#76b9ed"/>
<rect x="240" y="717.5" width="39.5" height="2.5" fill="#76b9ed"/>
<rect x="285" y="717.5" width="49" height="2.5" fill="#76b9ed"/>
<rect x="339.5" y="717.5" width="40.5" height="2.5" fill="#76b9ed"/>
<rect x="389.5" y="717.5" width="40.5" height="2.5" fill="#76b9ed"/>
<rect x="439.5" y="717.5" width="39.5" height="2.5" fill="#76b9ed"/>
<path d="M1027 703L1033 696.5L1039 703" stroke="#fff" stroke-width="1.1" fill="none"/>
<rect x="1051.5" y="692" width="8" height="13" rx="1.5" fill="#fff"/><path d="M1055.5 705V707.5M1052.5 707.5H1058.5" stroke="#fff" stroke-width="1"/>
<rect x="1075.5" y="695.5" width="12.5" height="8.5" fill="#fff"/><rect x="1088" y="698" width="1.5" height="3.5" fill="#fff"/><path d="M1072.5 694V697.5Q1072.5 700 1075 700M1074.5 694V697" stroke="#fff" stroke-width="0.9" fill="none"/>
<path d="M1099.5 707Q1100 697 1110 694.5M1102.5 707Q1103 700 1110 698M1105.5 707Q1106 703 1110 701.5" stroke="#ddd" stroke-width="0.9" fill="none"/><circle cx="1110.5" cy="706" r="1.1" fill="#fff"/>
<path d="M1121 697H1124L1128 693V706L1124 702H1121Z" fill="none" stroke="#fff" stroke-width="1"/><path d="M1130.5 697Q1132.5 699.5 1130.5 702M1133 695Q1136.5 699.5 1133 704" stroke="#ddd" stroke-width="0.9" fill="none"/>
<path d="M1144.5 697V704.5H1152M1144.5 697H1152M1150 692V708" stroke="#fff" stroke-width="1.8" fill="none"/>
</svg>
</body></html>
